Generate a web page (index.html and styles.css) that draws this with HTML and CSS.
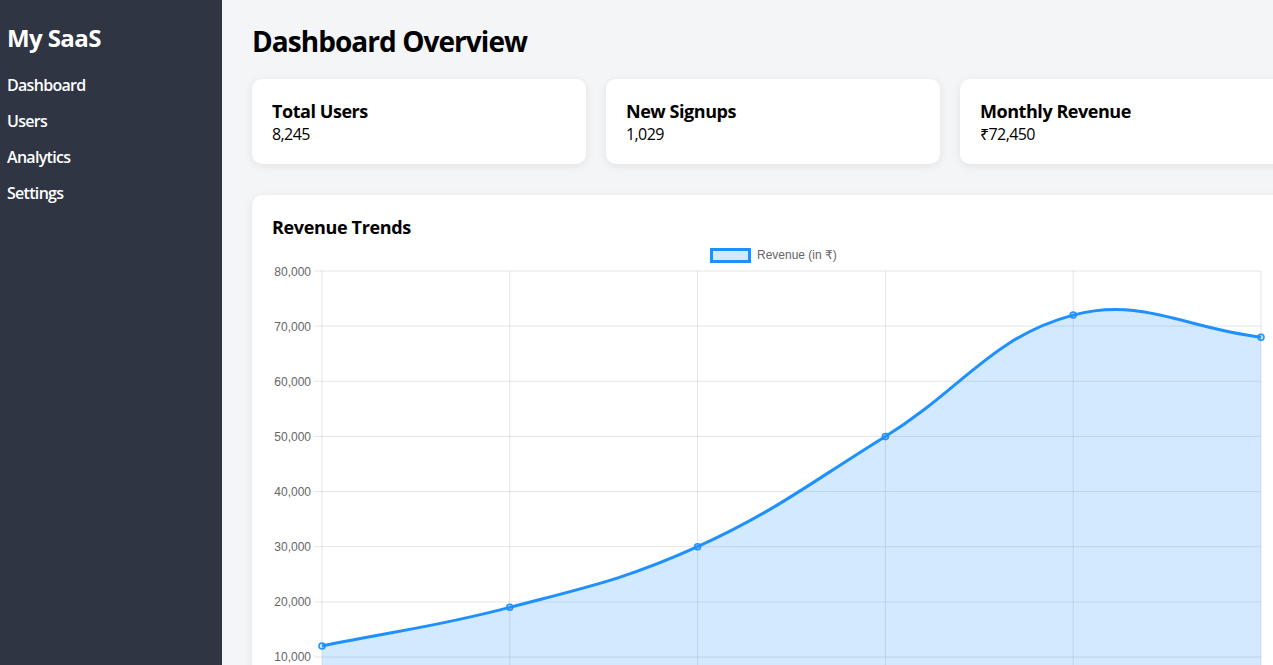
FILE: index.html
```html
<!DOCTYPE html>
<html lang="en">
<head>
<meta charset="utf-8">
<title>My SaaS Dashboard</title>
<link rel="stylesheet" href="styles.css">
</head>
<body>
<aside class="sidebar">
  <h2 class="logo">My SaaS</h2>
  <ul class="nav">
    <li>Dashboard</li>
    <li>Users</li>
    <li>Analytics</li>
    <li>Settings</li>
  </ul>
</aside>
<main class="main">
  <h1 class="page-title">Dashboard Overview</h1>
  <div class="stats">
    <div class="card stat">
      <h3 class="stat-title">Total Users</h3>
      <p class="stat-value">8,245</p>
    </div>
    <div class="card stat">
      <h3 class="stat-title">New Signups</h3>
      <p class="stat-value">1,029</p>
    </div>
    <div class="card stat">
      <h3 class="stat-title">Monthly Revenue</h3>
      <p class="stat-value">₹72,450</p>
    </div>
  </div>
  <div class="card chart-card">
    <h3 class="stat-title">Revenue Trends</h3>
    <svg class="chart" width="1002" height="520" viewBox="272 239 1002 520">
      <g class="grid">
        <line x1="314" y1="271" x2="1261" y2="271"/>
        <line x1="314" y1="326.1" x2="1261" y2="326.1"/>
        <line x1="314" y1="381.3" x2="1261" y2="381.3"/>
        <line x1="314" y1="436.4" x2="1261" y2="436.4"/>
        <line x1="314" y1="491.6" x2="1261" y2="491.6"/>
        <line x1="314" y1="546.7" x2="1261" y2="546.7"/>
        <line x1="314" y1="601.9" x2="1261" y2="601.9"/>
        <line x1="314" y1="657" x2="1261" y2="657"/>
        <line x1="314" y1="712.1" x2="1261" y2="712.1"/>
        <line x1="322" y1="271" x2="322" y2="720"/>
        <line x1="509.8" y1="271" x2="509.8" y2="720"/>
        <line x1="697.6" y1="271" x2="697.6" y2="720"/>
        <line x1="885.4" y1="271" x2="885.4" y2="720"/>
        <line x1="1073.2" y1="271" x2="1073.2" y2="720"/>
        <line x1="1261" y1="271" x2="1261" y2="720"/>
      </g>
      <g class="ylabels">
        <text x="311" y="275.5">80,000</text>
        <text x="311" y="330.5">70,000</text>
        <text x="311" y="385.5">60,000</text>
        <text x="311" y="440.5">50,000</text>
        <text x="311" y="495.5">40,000</text>
        <text x="311" y="551">30,000</text>
        <text x="311" y="606">20,000</text>
        <text x="311" y="661">10,000</text>
        <text x="311" y="716">0</text>
      </g>
      <rect class="legend-box" x="711.5" y="249.5" width="38" height="12"/>
      <text class="legend-text" x="757" y="259">Revenue (in ₹)</text>
      <path class="area" d="M322,645.97 C397.12,630.53 435.76,626.94 509.8,607.37 C586.01,587.23 626.18,579.21 697.6,546.71 C776.42,510.84 811.26,482.14 885.4,436.43 C961.5,389.5 991.8,336.62 1073.2,315.11 C1142.04,296.92 1185.88,328.35 1261,337.17 L1261,712.1 L322,712.1 Z"/>
      <path class="line" d="M322,645.97 C397.12,630.53 435.76,626.94 509.8,607.37 C586.01,587.23 626.18,579.21 697.6,546.71 C776.42,510.84 811.26,482.14 885.4,436.43 C961.5,389.5 991.8,336.62 1073.2,315.11 C1142.04,296.92 1185.88,328.35 1261,337.17"/>
      <g class="points">
        <circle cx="322" cy="645.97" r="3"/>
        <circle cx="509.8" cy="607.37" r="3"/>
        <circle cx="697.6" cy="546.71" r="3"/>
        <circle cx="885.4" cy="436.43" r="3"/>
        <circle cx="1073.2" cy="315.11" r="3"/>
        <circle cx="1261" cy="337.17" r="3"/>
      </g>
    </svg>
  </div>
</main>
</body>
</html>
```

FILE: styles.css
```css
html, body {
  margin: 0;
  padding: 0;
}
body {
  display: flex;
  height: 100vh;
  overflow: hidden;
  font-family: "Open Sans", "Noto Sans", "DejaVu Sans", sans-serif;
  background: #f4f5f7;
  color: #000;
}
.sidebar {
  flex: 0 0 222px;
  width: 222px;
  box-sizing: border-box;
  background: #2f3542;
  color: #fff;
  padding: 22px 7px 0 7px;
}
.logo {
  margin: 0 0 13px 0;
  font-size: 24px;
  line-height: 32px;
  font-weight: 700;
  letter-spacing: -0.6px;
}
.nav {
  list-style: none;
  margin: 0;
  padding: 0;
}
.nav li {
  font-size: 16px;
  line-height: 36px;
  font-weight: 600;
  letter-spacing: -0.7px;
}
.main {
  flex: 0 0 auto;
  padding: 23px 30px 0 30px;
}
.page-title {
  margin: 0 0 20px 0;
  font-size: 28px;
  line-height: 36px;
  font-weight: 700;
  letter-spacing: -0.95px;
}
.stats {
  display: grid;
  grid-template-columns: repeat(3, 334px);
  gap: 20px;
  margin-bottom: 31px;
}
.card {
  background: #fff;
  border-radius: 10px;
  box-shadow: 0 2px 10px rgba(0, 0, 0, 0.08);
  padding: 20px;
}
.stat-title {
  margin: 0;
  font-size: 18px;
  line-height: 25px;
  font-weight: 700;
  letter-spacing: -0.45px;
}
.stat-value {
  margin: 0;
  font-size: 16px;
  line-height: 20px;
  letter-spacing: -0.6px;
}
.chart-card {
  width: 1002px;
  padding-bottom: 20px;
}
.chart-card .stat-title {
  line-height: 24px;
  letter-spacing: -0.35px;
}
.chart {
  display: block;
}
.grid line {
  stroke: rgba(0, 0, 0, 0.1);
  stroke-width: 1;
}
.ylabels text {
  font-family: "Liberation Sans", Arial, sans-serif;
  font-size: 12px;
  fill: #666;
  text-anchor: end;
}
.legend-box {
  fill: rgba(30, 144, 255, 0.2);
  stroke: #1e90ff;
  stroke-width: 3;
}
.legend-text {
  font-family: "Liberation Sans", Arial, "DejaVu Sans", sans-serif;
  font-size: 12px;
  fill: #666;
}
.area {
  fill: rgba(30, 144, 255, 0.2);
  stroke: none;
}
.line {
  fill: none;
  stroke: #1e90ff;
  stroke-width: 3;
}
.points circle {
  fill: rgba(30, 144, 255, 0.2);
  stroke: #1e90ff;
  stroke-width: 1.5;
}
```
